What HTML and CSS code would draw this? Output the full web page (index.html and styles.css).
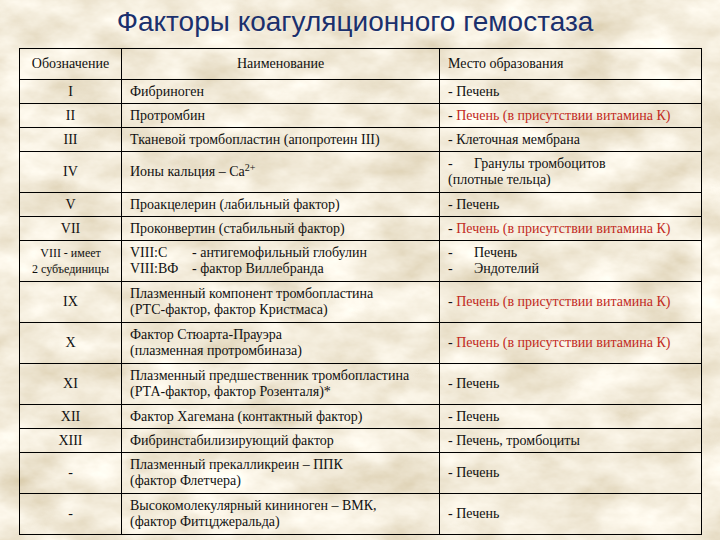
FILE: index.html
```html
<!DOCTYPE html>
<html lang="ru">
<head>
<meta charset="utf-8">
<title>Факторы коагуляционного гемостаза</title>
<link rel="stylesheet" href="styles.css">
</head>
<body>
<svg class="paper" width="720" height="540" aria-hidden="true">
  <filter id="parch" x="0" y="0" width="100%" height="100%">
    <feTurbulence type="fractalNoise" baseFrequency="0.016 0.028" numOctaves="5" seed="7" result="n"/>
    <feColorMatrix in="n" type="matrix" values="0.44 0 0 0 0.675  0.52 0 0 0 0.575  0.66 0 0 0 0.375  0 0 0 0 1"/>
  </filter>
  <rect width="720" height="540" filter="url(#parch)"/>
</svg>
<main class="page">
  <h1 class="title">Факторы коагуляционного гемостаза</h1>
  <table class="factors">
    <colgroup><col class="c1"><col class="c2"><col class="c3"></colgroup>
    <tr class="head">
      <td class="code">Обозначение</td>
      <td class="mid">Наименование</td>
      <td>Место образования</td>
    </tr>
    <tr class="s"><td class="code">I</td><td>Фибриноген</td><td>- Печень</td></tr>
    <tr class="s"><td class="code">II</td><td>Протромбин</td><td>- <span class="red">Печень (в присутствии витамина К)</span></td></tr>
    <tr class="s"><td class="code">III</td><td>Тканевой тромбопластин (апопротеин III)</td><td>- Клеточная мембрана</td></tr>
    <tr class="d"><td class="code">IV</td><td>Ионы кальция – Ca<sup>2+</sup></td><td><span class="tab">-</span>Гранулы тромбоцитов<br>(плотные тельца)</td></tr>
    <tr class="s"><td class="code">V</td><td>Проакцелерин (лабильный фактор)</td><td>- Печень</td></tr>
    <tr class="s"><td class="code">VII</td><td>Проконвертин (стабильный фактор)</td><td>- <span class="red">Печень (в присутствии витамина К)</span></td></tr>
    <tr class="d"><td class="code small">VIII - имеет<br>2 субъединицы</td><td><span class="tab8">VIII:C</span>- антигемофильный глобулин<br><span class="tab8">VIII:ВФ</span>- фактор Виллебранда</td><td><span class="tab">-</span>Печень<br><span class="tab">-</span>Эндотелий</td></tr>
    <tr class="d"><td class="code">IX</td><td>Плазменный компонент тромбопластина<br>(РТС-фактор, фактор Кристмаса)</td><td>- <span class="red">Печень (в присутствии витамина К)</span></td></tr>
    <tr class="d"><td class="code">X</td><td>Фактор Стюарта-Прауэра<br>(плазменная протромбиназа)</td><td>- <span class="red">Печень (в присутствии витамина К)</span></td></tr>
    <tr class="d"><td class="code">XI</td><td>Плазменный предшественник тромбопластина<br>(РТА-фактор, фактор Розенталя)*</td><td>- Печень</td></tr>
    <tr class="s"><td class="code">XII</td><td>Фактор Хагемана (контактный фактор)</td><td>- Печень</td></tr>
    <tr class="s"><td class="code">XIII</td><td>Фибринстабилизирующий фактор</td><td>- Печень, тромбоциты</td></tr>
    <tr class="d"><td class="code">-</td><td>Плазменный прекалликреин – ППК<br>(фактор Флетчера)</td><td>- Печень</td></tr>
    <tr class="d"><td class="code">-</td><td>Высокомолекулярный кининоген – ВМК,<br>(фактор Фитцджеральда)</td><td>- Печень</td></tr>
  </table>
</main>
</body>
</html>
```
FILE: styles.css
```css
html, body {
  margin: 0;
  padding: 0;
  width: 720px;
  height: 540px;
  overflow: hidden;
  background: #e4d6b4;
}
.paper {
  position: absolute;
  left: 0;
  top: 0;
  z-index: 0;
}
.page {
  position: relative;
  z-index: 1;
  width: 720px;
}
.title {
  margin: 7px 0 11px 0;
  padding-right: 10px;
  font-family: "Liberation Sans", Arial, sans-serif;
  font-weight: normal;
  font-size: 28px;
  line-height: 30px;
  text-align: center;
  color: #1b306c;
  text-shadow: 1px 1px 1px rgba(255, 255, 255, 0.35);
}
.factors {
  margin-left: 19px;
  width: 682px;
  border-collapse: collapse;
  table-layout: fixed;
  font-family: "Liberation Serif", "Times New Roman", serif;
  font-size: 14px;
  line-height: 16px;
  color: #111;
}
.c1 { width: 102px; }
.c2 { width: 318px; }
.c3 { width: 262px; }
.factors td {
  border: 1px solid #000;
  padding: 0 8px;
  vertical-align: middle;
  white-space: nowrap;
}
.factors tr.head td { height: 30px; }
.factors tr.s td { height: 23px; }
.factors tr.d td { height: 40px; }
.factors td.code {
  text-align: center;
  padding: 0 2px;
}
.factors td.mid { text-align: center; }
.factors td.small {
  font-size: 12px;
  line-height: 16px;
}
.red { color: #c22a1e; }
.tab {
  display: inline-block;
  width: 26px;
}
.tab8 {
  display: inline-block;
  width: 62px;
}
sup {
  font-size: 10px;
  line-height: 0;
  vertical-align: 5px;
}
```
